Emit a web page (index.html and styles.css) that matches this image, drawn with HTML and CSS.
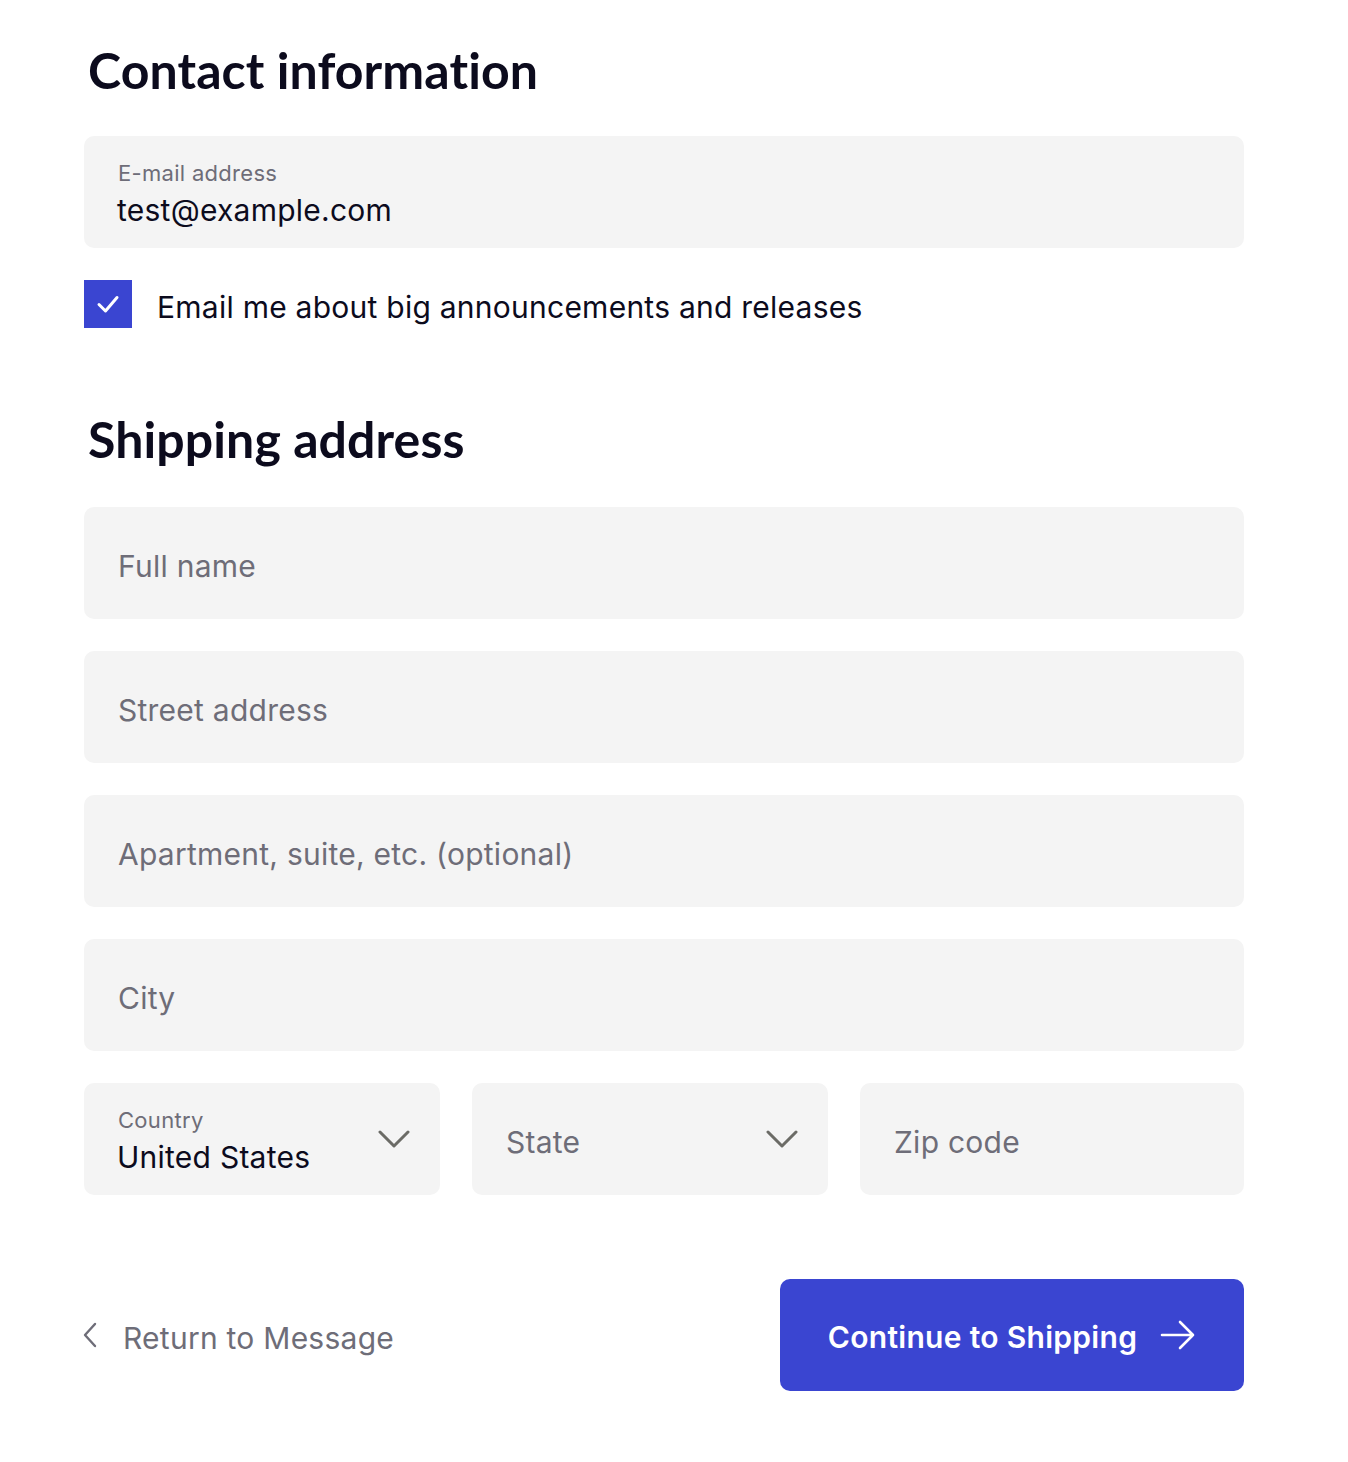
FILE: index.html
```html
<!DOCTYPE html>
<html lang="en">
<head>
<meta charset="utf-8">
<title>Checkout</title>
<link rel="stylesheet" href="styles.css">
</head>
<body>
<main class="page">
  <section class="section contact">
    <h1 class="title">Contact information</h1>
    <div class="field field-labeled">
      <div class="stack">
        <span class="field-label">E-mail address</span>
        <span class="field-value">test@example.com</span>
      </div>
    </div>
    <label class="check-row">
      <span class="checkbox">
        <svg viewBox="0 0 48 48" width="48" height="48"><path d="M15 24.5 L21.5 31 L33 17.5" fill="none" stroke="#fff" stroke-width="3" stroke-linecap="round" stroke-linejoin="round"/></svg>
      </span>
      <span class="check-text">Email me about big announcements and releases</span>
    </label>
  </section>

  <section class="section shipping">
    <h1 class="title">Shipping address</h1>
    <div class="fields">
      <div class="field"><span class="placeholder">Full name</span></div>
      <div class="field"><span class="placeholder">Street address</span></div>
      <div class="field"><span class="placeholder">Apartment, suite, etc. (optional)</span></div>
      <div class="field"><span class="placeholder">City</span></div>
      <div class="row">
        <div class="field field-select field-labeled">
          <div class="stack">
            <span class="field-label">Country</span>
            <span class="field-value">United States</span>
          </div>
          <svg class="chev" viewBox="0 0 32 20" width="32" height="20"><path d="M2 3 L16 17 L30 3" fill="none" stroke="#6b6b66" stroke-width="3" stroke-linecap="round" stroke-linejoin="round"/></svg>
        </div>
        <div class="field field-select">
          <span class="placeholder">State</span>
          <svg class="chev" viewBox="0 0 32 20" width="32" height="20"><path d="M2 3 L16 17 L30 3" fill="none" stroke="#6b6b66" stroke-width="3" stroke-linecap="round" stroke-linejoin="round"/></svg>
        </div>
        <div class="field"><span class="placeholder">Zip code</span></div>
      </div>
    </div>
  </section>

  <div class="actions">
    <a class="back" href="#">
      <svg viewBox="0 0 16 26" width="16" height="26"><path d="M13 2 L3 13 L13 24" fill="none" stroke="#6e6d78" stroke-width="2.4" stroke-linecap="round" stroke-linejoin="round"/></svg>
      <span>Return to Message</span>
    </a>
    <button class="primary" type="button">
      <span>Continue to Shipping</span>
      <svg viewBox="0 0 36 30" width="36" height="30"><path d="M2 15 H33 M20 2 L33 15 L20 28" fill="none" stroke="#fff" stroke-width="2.6" stroke-linecap="round" stroke-linejoin="round"/></svg>
    </button>
  </div>
</main>
</body>
</html>
```

FILE: styles.css
```css
* { box-sizing: border-box; }

body {
  margin: 0;
  background: #ffffff;
  font-family: "Inter", "Lato", sans-serif;
  color: #0c0b1d;
}

.page {
  width: 1160px;
  margin-left: 84px;
  padding-top: 36px;
}

.title {
  margin: 0 0 0 4px;
  font-family: "Lato", "Inter", sans-serif;
  font-size: 50px;
  line-height: 68px;
  font-weight: 700;
  color: #0c0b1d;
  letter-spacing: 0.1px;
}

.contact .title { margin-bottom: 32px; }
.shipping .title { margin-bottom: 34px; }

.field {
  height: 112px;
  background: #f4f4f4;
  border-radius: 10px;
  padding: 0 34px;
  display: flex;
  align-items: center;
}

.field-labeled .stack {
  align-self: flex-start;
  padding-top: 23px;
  display: flex;
  flex-direction: column;
}

.field-label {
  display: block;
  font-size: 22px;
  line-height: 28px;
  letter-spacing: 0.3px;
  color: #6e6d78;
}

.field-value {
  display: block;
  margin-top: 4px;
  margin-left: -1px;
  font-size: 30px;
  line-height: 38px;
  letter-spacing: 0.25px;
  color: #0c0b1d;
}

.placeholder {
  padding-top: 6px;
  font-size: 30px;
  line-height: 38px;
  letter-spacing: 0.25px;
  color: #6e6d78;
}

.check-row {
  display: flex;
  align-items: center;
  gap: 25px;
  margin-top: 32px;
}

.checkbox {
  width: 48px;
  height: 48px;
  background: #3a45d1;
  display: flex;
  flex: none;
}

.check-text {
  font-size: 30px;
  line-height: 38px;
  letter-spacing: 0.25px;
  color: #0c0b1d;
  padding-top: 6px;
}

.shipping { margin-top: 77px; }

.fields {
  display: flex;
  flex-direction: column;
  gap: 32px;
}

.row {
  display: grid;
  grid-template-columns: 356px 356px 1fr;
  gap: 32px;
}

.field-select {
  justify-content: space-between;
  padding-right: 30px;
}

.chev { flex: none; }

.actions {
  display: flex;
  justify-content: space-between;
  align-items: center;
  margin-top: 84px;
}

.back {
  display: flex;
  align-items: center;
  gap: 25px;
  text-decoration: none;
  color: #6e6d78;
  font-size: 30px;
  line-height: 38px;
  letter-spacing: 0.25px;
  margin-left: -2px;
}

.back span { padding-top: 6px; }

.primary {
  width: 464px;
  height: 112px;
  border: 0;
  border-radius: 10px;
  background: #3a45d1;
  color: #ffffff;
  font-family: inherit;
  font-size: 30px;
  font-weight: 600;
  letter-spacing: 0.3px;
  display: flex;
  align-items: center;
  justify-content: center;
  gap: 23px;
  padding: 4px 0 0;
}
.primary svg { margin-top: -4px; }
```
